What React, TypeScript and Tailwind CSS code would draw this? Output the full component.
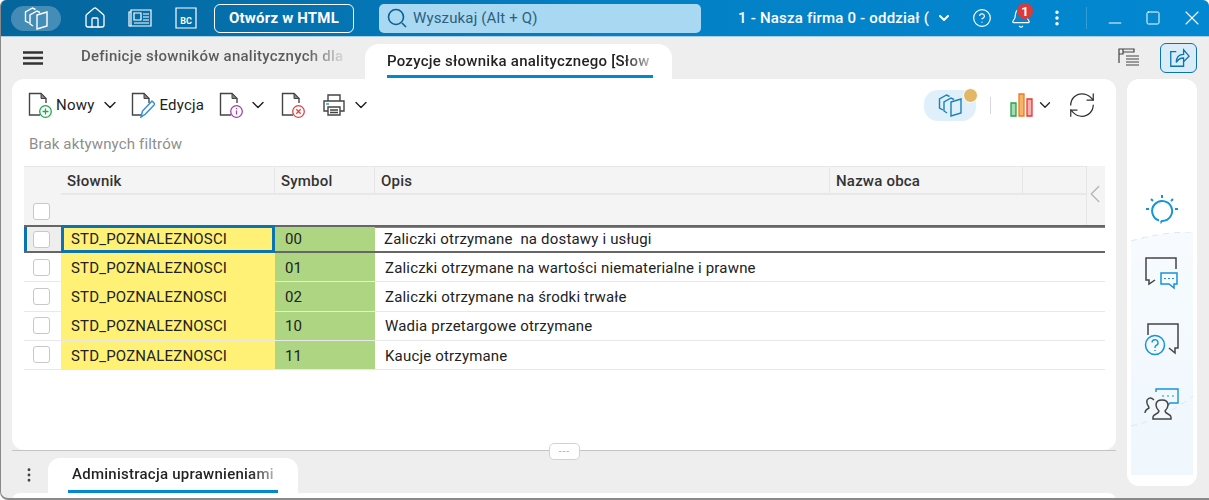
import React from "react";
import { ChevronDown, Home, X, Minus, Square, MoreVertical, ChevronLeft, RefreshCw, HelpCircle, Bell } from "lucide-react";

const rows = [
  { symbol: "00", opis: "Zaliczki otrzymane\u00a0 na dostawy i usługi" },
  { symbol: "01", opis: "Zaliczki otrzymane na wartości niematerialne i prawne" },
  { symbol: "02", opis: "Zaliczki otrzymane na środki trwałe" },
  { symbol: "10", opis: "Wadia przetargowe otrzymane" },
  { symbol: "11", opis: "Kaucje otrzymane" },
];

function Stack({ className }: { className: string }) {
  return (
    <svg viewBox="0 0 24 24" fill="none" stroke="currentColor" strokeWidth="1.4" className={className}>
      <path d="M5 17 1.500 15V6l7-4 3 1.500" />
      <path d="M9 20 6 18V9l7-4 3 1.500" />
      <path d="M13 9l10-3v14l-10 3z" />
    </svg>
  );
}

function DocIcon({ badge }: { badge: React.ReactNode }) {
  return (
    <svg viewBox="0 0 24 26" fill="none" className="h-[26px] w-[24px] shrink-0">
      <path d="M12 23H1.500V1.500H13l5 5V11" stroke="#444" strokeWidth="1.4" />
      <path d="M13 1.500v5h5z" fill="#888" stroke="#444" strokeWidth="1" />
      {badge}
    </svg>
  );
}

function Checkbox() {
  return <div className="h-[17px] w-[17px] shrink-0 rounded-[3px] border border-[#c8c8c8] bg-white" />;
}

function HeadCell({ w, children }: { w: string; children?: React.ReactNode }) {
  return (
    <div className={`${w} flex h-full items-center border-r border-[#e6e6e6] pl-[6px] pt-[2px] text-[15px] font-medium tracking-[0.2px] text-[#333]`}>
      {children}
    </div>
  );
}

export default function App() {
  return (
    <div className="flex h-[500px] w-[1209px] flex-col overflow-hidden rounded-t-[6px] rounded-bl-[8px] border-b-2 border-l border-[#8a8a8a] bg-[#eeeeee] font-['Roboto',sans-serif]">
      {/* title bar */}
      <div className="flex h-[37px] shrink-0 items-center border-b border-[#a9cfe4] bg-gradient-to-r from-[#05659b] via-[#0480c4] to-[#0288d1] text-white">
        <div className="ml-[10px] flex h-[25px] w-[50px] shrink-0 items-center justify-center rounded-full bg-white/25">
          <Stack className="h-[24px] w-[24px]" />
        </div>
        <Home className="ml-[22px] h-[24px] w-[24px] shrink-0" strokeWidth={1.3} />
        <svg viewBox="0 0 24 20" fill="none" stroke="currentColor" strokeWidth="1.2" className="ml-[21px] h-[20px] w-[24px] shrink-0">
          <path d="M3 2h20v16H3z" />
          <path d="M3 4H1v14h2" />
          <path d="M6 5h7v7H6z" />
          <path d="M15 6h6M15 9h6M15 12h6M6 15h15" />
        </svg>
        <svg viewBox="0 0 22 22" fill="none" className="ml-[23px] h-[22px] w-[22px] shrink-0">
          <path d="M1 1h20v20H1z" stroke="currentColor" strokeWidth="1.2" />
          <text x="11" y="17" textAnchor="middle" fill="currentColor" fontSize="9" fontWeight="700" fontFamily="Roboto">BC</text>
        </svg>
        <div className="ml-[17px] flex h-[29px] w-[140px] shrink-0 items-center justify-center rounded-[6px] border border-white text-[15px] font-bold tracking-[0.2px]">
          Otwórz w HTML
        </div>
        <div className="ml-[25px] flex h-[29px] w-[322px] shrink-0 items-center rounded-[5px] bg-[#a8d8f2] pl-[7px] text-[15px] text-[#2e5f7c]">
          <svg viewBox="0 0 22 22" fill="none" stroke="#0b5f8f" strokeWidth="1.6" className="h-[22px] w-[22px]">
            <circle cx="10" cy="10" r="7.500" />
            <path d="m16 16 4 4" />
          </svg>
          <span className="ml-[5px] tracking-[0.15px]">Wyszukaj (Alt + Q)</span>
        </div>
        <div className="ml-[37px] w-[186px] shrink-0 whitespace-nowrap text-[15px] font-medium tracking-[0.2px]">
          1 - Nasza firma 0 - oddział (
        </div>
        <ChevronDown className="ml-[12px] h-[16px] w-[16px] shrink-0" strokeWidth={3} />
        <HelpCircle className="ml-[20px] h-[20px] w-[20px] shrink-0" strokeWidth={1.4} />
        <div className="relative ml-[18px] h-[22px] w-[22px] shrink-0">
          <Bell className="h-[22px] w-[22px]" strokeWidth={1.3} />
          <div className="absolute left-[7px] top-[-4px] flex h-[16px] w-[16px] items-center justify-center rounded-full bg-[#d93a3a] text-[13px] font-bold leading-none">
            1
          </div>
        </div>
        <MoreVertical className="ml-[15px] h-[20px] w-[20px] shrink-0" strokeWidth={2.2} />
        <div className="ml-[19px] h-[22px] w-px shrink-0 bg-white/20" />
        <Minus className="ml-[18px] mt-[9px] h-[20px] w-[20px] shrink-0" strokeWidth={1.2} />
        <Square className="ml-[20px] h-[16px] w-[16px] shrink-0" strokeWidth={1.5} />
        <X className="ml-[19px] h-[24px] w-[24px] shrink-0" strokeWidth={1.1} />
      </div>

      {/* body */}
      <div className="flex min-h-0 flex-1">
        <div className="flex w-[1126px] min-w-0 shrink-0 flex-col">
          {/* upper tabs */}
          <div className="flex h-[42px] shrink-0 items-end pl-[22px]">
            <div className="flex h-full items-center">
              <svg viewBox="0 0 20 14" stroke="#333" strokeWidth="2.400" className="h-[14px] w-[20px]">
                <path d="M0 1.500h20M0 7h20M0 12.500h20" />
              </svg>
            </div>
            <div className="ml-[38px] flex h-full w-[284px] shrink-0 items-center pb-[4px]">
              <span className="w-[262px] overflow-hidden whitespace-nowrap bg-gradient-to-r from-[#5a5a5a] from-[86%] to-[#d8d8d8] bg-clip-text text-[15px] font-medium tracking-[0.25px] text-transparent">
                Definicje słowników analitycznych dla
              </span>
            </div>
            <div className="flex h-[35px] w-[307px] shrink-0 flex-col rounded-t-[14px] bg-white px-[22px] pt-[7px]">
              <span className="w-[263px] overflow-hidden whitespace-nowrap bg-gradient-to-r from-[#222] from-[90%] to-[#bbb] bg-clip-text text-[15px] leading-[20px] font-medium tracking-[0.25px] text-transparent">
                Pozycje słownika analitycznego [Słow
              </span>
              <div className="mt-[4px] h-[3px] w-[266px] shrink-0 bg-[#0288d1]" />
            </div>
          </div>

          {/* main card */}
          <div className="ml-[11px] flex h-[371px] w-[1104px] shrink-0 flex-col rounded-[12px] bg-white pl-[12px] pr-[11px]">
            <div className="flex h-[52px] shrink-0 items-center pl-[4px] text-[15px] tracking-[0.2px] text-[#222]">
              <DocIcon badge={<g stroke="#1fa84f" strokeWidth="1.3"><circle cx="17.500" cy="19.500" r="5.800" fill="white" /><path d="M17.500 16.500v6M14.500 19.500h6" /></g>} />
              <span className="ml-[4px]">Nowy</span>
              <ChevronDown className="ml-[6px] h-[20px] w-[20px] shrink-0" strokeWidth={1.7} />
              <div className="ml-[11px]">
                <DocIcon badge={<g><path d="m10 25 1.500-6L21 9l3 3-9.500 10z" fill="white" stroke="#2f8fd8" strokeWidth="1.500" /></g>} />
              </div>
              <span className="ml-[4px]">Edycja</span>
              <div className="ml-[15px]">
                <DocIcon badge={<g><circle cx="17.500" cy="19.500" r="5.800" fill="white" stroke="#a33fb5" strokeWidth="1.3" /><path d="M17.500 18.500v4M17.500 16v1.300" stroke="#a33fb5" strokeWidth="1.3" /></g>} />
              </div>
              <ChevronDown className="ml-[5px] h-[20px] w-[20px] shrink-0" strokeWidth={1.7} />
              <div className="ml-[13px]">
                <DocIcon badge={<g><circle cx="17.500" cy="19.500" r="5.800" fill="white" stroke="#e8403f" strokeWidth="1.3" /><path d="m15.300 17.300 4.400 4.400m0-4.400-4.400 4.400" stroke="#e8403f" strokeWidth="1.3" /></g>} />
              </div>
              <svg viewBox="0 0 24 24" fill="none" stroke="#444" strokeWidth="1.4" className="ml-[17px] h-[24px] w-[24px] shrink-0">
                <path d="M6 8V2h12v6" />
                <path d="M6 18H2V8h20v10h-4" />
                <path d="M6 14h12v8H6z" />
                <path d="M8 17h8M8 19.500h8" />
                <path d="M4 11h3" stroke="#2f8fd8" />
              </svg>
              <ChevronDown className="ml-[5px] h-[20px] w-[20px] shrink-0" strokeWidth={1.7} />
              <div className="ml-auto flex items-center">
                <div className="relative flex h-[31px] w-[52px] items-center justify-center rounded-[14px] bg-[#e0f0fa]">
                  <Stack className="h-[24px] w-[24px] text-[#1a80bd]" />
                  <div className="absolute right-[-2px] top-[-2px] h-[15px] w-[15px] rounded-full border border-white bg-[#e2b866]" />
                </div>
                <div className="ml-[14px] h-[17px] w-px bg-[#d8d8d8]" />
                <svg viewBox="0 0 24 24" className="ml-[19px] h-[24px] w-[24px]" fill="none" strokeWidth="1.3">
                  <path d="M1 10h5v13H1z" fill="#a8dcb0" stroke="#22a24a" />
                  <path d="M9 1h5v22H9z" fill="#f6b46a" stroke="#ec7b1f" />
                  <path d="M17 6h5v17h-5z" fill="#f6b0b0" stroke="#e83535" />
                </svg>
                <ChevronDown className="ml-[2px] h-[18px] w-[18px]" strokeWidth={1.7} />
                <RefreshCw className="ml-[13px] mr-[8px] h-[30px] w-[30px] text-[#333]" strokeWidth={1} />
              </div>
            </div>

            <div className="flex h-[35px] shrink-0 items-center pb-[9px] pl-[5px] text-[15px] tracking-[0.15px] text-[#8e8e8e]">
              Brak aktywnych filtrów
            </div>

            {/* grid */}
            <div className="flex h-[59px] shrink-0 bg-[#f4f4f4]">
              <div className="flex w-[37px] shrink-0 items-end justify-center border-t border-[#e6e6e6] pb-[5px] pr-[2px]">
                <Checkbox />
              </div>
              <div className="flex min-w-0 flex-1 flex-col">
                <div className="flex h-[29px] shrink-0 border-b-2 border-t border-[#e8e8e8]">
                  <HeadCell w="w-[214px]">Słownik</HeadCell>
                  <HeadCell w="w-[100px]">Symbol</HeadCell>
                  <HeadCell w="w-[455px]">Opis</HeadCell>
                  <HeadCell w="w-[193px]">Nazwa obca</HeadCell>
                </div>
                <div className="flex-1" />
              </div>
              <div className="flex w-[19px] shrink-0 items-center justify-center border-l border-[#e6e6e6] pb-[3px] pr-[3px]">
                <ChevronLeft className="h-[30px] w-[30px] shrink-0 text-[#b4b4b4]" strokeWidth={1} />
              </div>
            </div>

            {rows.map((row, i) => (
              <div
                key={row.symbol}
                className={
                  i === 0
                    ? "flex h-[28px] shrink-0 border-y-2 border-[#666] text-[15px] tracking-[0.18px] text-[#222]"
                    : "flex h-[29.25px] shrink-0 border-b border-[#e8e8e8] text-[15px] tracking-[0.18px] text-[#222]"
                }
              >
                {i === 0 ? (
                  <div className="flex w-[37px] shrink-0 items-center justify-center border-l-[3px] border-[#0b74b0] bg-[#eeeeee] pr-[5px]">
                    <Checkbox />
                  </div>
                ) : (
                  <div className="flex w-[37px] shrink-0 items-center justify-center pr-[2px]">
                    <Checkbox />
                  </div>
                )}
                {i === 0 ? (
                  <div className="-my-[2px] flex w-[214px] shrink-0 items-center border-[3px] border-[#0b74b0] bg-[#fff176] pl-[7px]">
                    STD_POZNALEZNOSCI
                  </div>
                ) : (
                  <div className="flex w-[214px] shrink-0 items-center bg-[#fff176] pl-[10px] pt-[2px]">STD_POZNALEZNOSCI</div>
                )}
                <div className={`flex w-[100px] shrink-0 items-center bg-[#aed581] pl-[10px] ${i === 0 ? "" : "pt-[2px]"}`}>{row.symbol}</div>
                <div className={`flex flex-1 items-center whitespace-nowrap ${i === 0 ? "border-t border-[#5b8fb0] pl-[9px]" : "pl-[10px] pt-[2px]"}`}>{row.opis}</div>
              </div>
            ))}
          </div>

          {/* splitter */}
          <div className="relative ml-[11px] h-px w-[1104px] shrink-0 bg-[#c4c4c4]">
            <div className="absolute left-[537px] top-[-7px] flex h-[17px] w-[31px] items-center justify-center rounded-[5px] border border-[#d2d2d2] bg-white text-[10px] leading-none tracking-[1px] text-[#aaa]">
              ---
            </div>
          </div>

          {/* lower tabs */}
          <div className="flex h-[42px] shrink-0 items-end">
            <MoreVertical className="mb-[9px] ml-[19px] h-[18px] w-[18px] shrink-0 text-[#444]" strokeWidth={1.8} />
            <div className="ml-[10px] flex h-[35px] w-[250px] shrink-0 flex-col rounded-t-[12px] bg-white pl-[20px] pt-[7px]">
              <span className="ml-[4px] w-[203px] overflow-hidden whitespace-nowrap bg-gradient-to-r from-[#222] from-[88%] to-[#bbb] bg-clip-text text-[15px] leading-[18px] font-medium tracking-[0.25px] text-transparent">
                Administracja uprawnieniami
              </span>
              <div className="mt-[7px] h-[3px] w-[210px] shrink-0 bg-[#0288d1]" />
            </div>
          </div>
          <div className="ml-[11px] h-[8px] w-[1104px] shrink-0 rounded-t-[8px] bg-white" />
        </div>

        {/* side panel */}
        <div className="flex min-w-0 flex-1 flex-col">
          <div className="-ml-[20px] mr-[12px] flex h-[42px] shrink-0 items-center justify-end">
            <svg viewBox="0 0 22 20" fill="none" stroke="#444" strokeWidth="1.2" className="mr-[20px] h-[20px] w-[22px] shrink-0">
              <path d="M1 1h4v5H1zM5 1h11v3H5zM8 8h13M8 11h13M8 14h13M8 17h13M1 6v9" />
            </svg>
            <div className="flex h-[30px] w-[37px] shrink-0 items-center justify-center rounded-[6px] border border-[#0b74b0] bg-[#d9ecf8]">
              <svg viewBox="0 0 24 24" fill="none" stroke="#0b74b0" strokeWidth="1.4" className="h-[22px] w-[22px]">
                <path d="M9 5H3v16h14v-6" />
                <path d="M9 17c0-6 3-9 8-9V3l6 7-6 6v-4c-4 0-6 1-8 5z" />
              </svg>
            </div>
          </div>
          <div className="flex h-[407px] w-[70px] shrink-0 flex-col rounded-[12px] bg-white px-[4px] pb-[11px]">
            <div className="flex h-[153px] shrink-0 items-end justify-center pb-[5px]">
              <svg viewBox="0 0 34 34" fill="none" stroke="#1793d8" strokeWidth="2" className="h-[34px] w-[34px]">
                <path d="M17 28c-1 0-1 2-1.500 2M17 28a10 10 0 1 0-3-.5" />
                <path d="M17 2v3M6 6l2 2M28 6l-2 2M1 16h3M30 16h3" />
              </svg>
            </div>
            <div className="relative flex flex-1 flex-col items-center gap-[30px] bg-gradient-to-b from-[#f7fbfe] to-[#eff7fd] pt-[23px]">
              <svg viewBox="0 0 62 243" fill="none" className="absolute inset-0 h-full w-full">
                <path d="M0 9Q30 0 62 0H0z" fill="white" />
                <path d="M0 9Q30 0 62 0" stroke="#d3e9f8" strokeDasharray="6 5" />
                <path d="M0 194Q30 188 62 164" stroke="#d3e9f8" strokeDasharray="6 5" />
              </svg>
              <svg viewBox="0 0 36 36" fill="none" className="relative h-[36px] w-[36px]">
                <path d="M32 14V3H2v22h3v4l6-4" stroke="#444" strokeWidth="1.5" />
                <path d="M17 18h16v11h-3v4l-5-4h-8z" fill="#f7fbfe" stroke="#1793d8" strokeWidth="1.500" />
                <path d="M20 23.500h2M24 23.500h2M28 23.500h2" stroke="#1793d8" strokeWidth="1.200" />
              </svg>
              <svg viewBox="0 0 36 36" fill="none" className="relative h-[36px] w-[36px]">
                <path d="M4 14V3h30v24h-3v5l-6-5" stroke="#444" strokeWidth="1.5" />
                <circle cx="11" cy="24" r="9.500" fill="#f4f9fd" stroke="#1793d8" strokeWidth="1.500" />
                <path d="M8 21.500a3 3 0 1 1 4 3c-1 .5-1 1-1 2.500M11 29v1" stroke="#1793d8" strokeWidth="1.400" />
              </svg>
              <svg viewBox="0 0 36 36" fill="none" className="relative h-[36px] w-[36px]">
                <path d="M12 5V2h22v14h-8l-3 3v-3" stroke="#1793d8" strokeWidth="1.4" />
                <path d="M18 9h2M23 9h2M28 9h2" stroke="#1793d8" strokeWidth="1.200" />
                <path d="M6 32v-2c0-3 6-3 6-6-2-2-3-3-3-6 0-3 2-5 6-5s6 2 6 5c0 3-1 4-3 6 0 3 6 3 6 6v2z" transform="translate(3 0)" fill="#f2f8fd" stroke="#444" strokeWidth="1.5" />
                <path d="M10 13c-4-4-8-1-7 3 0 2 2 3 2 5-2 1-4 2-4 5" stroke="#444" strokeWidth="1.4" />
              </svg>
            </div>
          </div>
        </div>
      </div>
    </div>
  );
}
